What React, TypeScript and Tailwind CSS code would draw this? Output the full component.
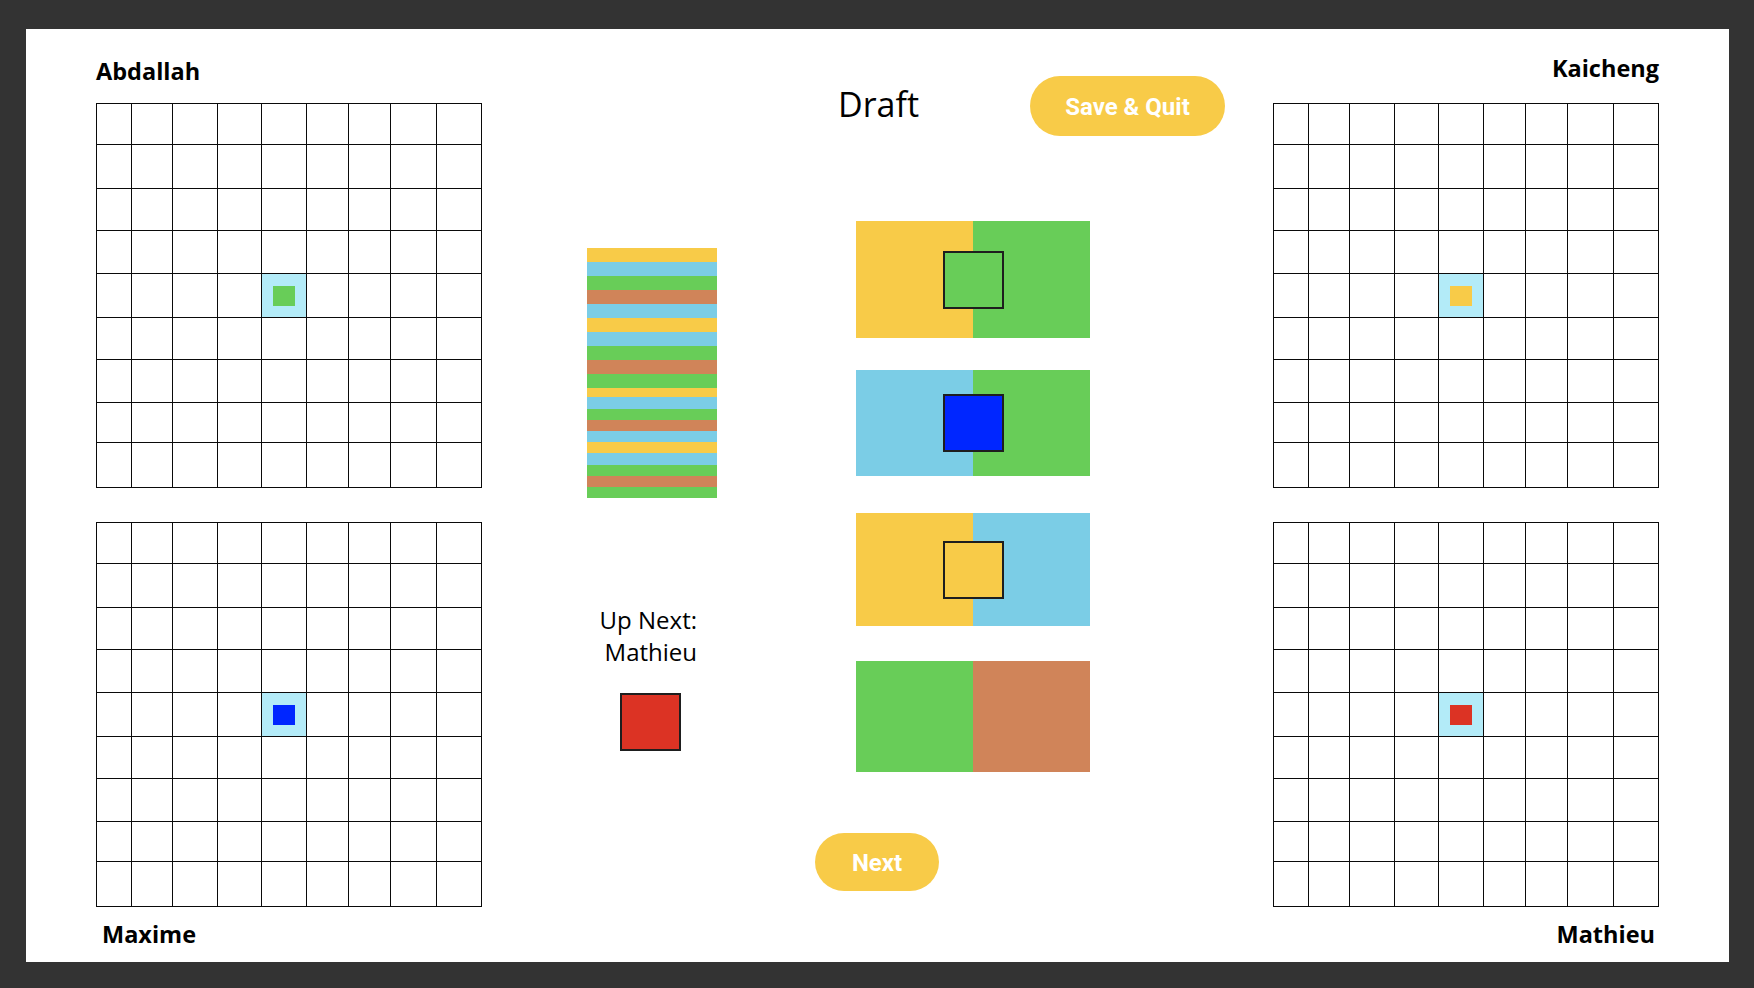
import React from "react";

const COLS = "grid-cols-[34px_40px_44px_43px_44px_41px_41px_45px_44px]";

function Board({ marker }: { marker: string }) {
  const cells = Array.from({ length: 81 }, (_, i) => i);
  return (
    <div
      className={`grid ${COLS} grid-rows-[40px_43px_41px_42px_43px_41px_42px_39px_44px] gap-px bg-[#0a0a0a] p-px w-[386px] h-[385px]`}
    >
      {cells.map((i) =>
        i === 40 ? (
          <div key={i} className="bg-[#b3ebf8] flex items-center justify-center">
            <div className={`w-[22px] h-[20px] ${marker}`} />
          </div>
        ) : (
          <div key={i} className="bg-white" />
        )
      )}
    </div>
  );
}

const STRIPES: string[] = [
  "h-[14px] bg-[#f8cb48]",
  "h-[14px] bg-[#7bcde6]",
  "h-[14px] bg-[#68cd58]",
  "h-[14px] bg-[#d08459]",
  "h-[14px] bg-[#7bcde6]",
  "h-[14px] bg-[#f8cb48]",
  "h-[14px] bg-[#7bcde6]",
  "h-[14px] bg-[#68cd58]",
  "h-[14px] bg-[#d08459]",
  "h-[14px] bg-[#68cd58]",
  "h-[9px] bg-[#f8cb48]",
  "h-[12px] bg-[#7bcde6]",
  "h-[11px] bg-[#68cd58]",
  "h-[11px] bg-[#d08459]",
  "h-[11px] bg-[#7bcde6]",
  "h-[11px] bg-[#f8cb48]",
  "h-[12px] bg-[#7bcde6]",
  "h-[11px] bg-[#68cd58]",
  "h-[11px] bg-[#d08459]",
  "h-[11px] bg-[#68cd58]",
];

type Tile = {
  box: string;
  left: string;
  right: string;
  piece?: string;
};

const TILES: Tile[] = [
  { box: "h-[117px]", left: "bg-[#f8cb48]", right: "bg-[#68cd58]", piece: "bg-[#68cd58]" },
  { box: "h-[106px] mt-[32px]", left: "bg-[#7bcde6]", right: "bg-[#68cd58]", piece: "bg-[#0026ff]" },
  { box: "h-[113px] mt-[37px]", left: "bg-[#f8cb48]", right: "bg-[#7bcde6]", piece: "bg-[#f8cb48]" },
  { box: "h-[111px] mt-[35px]", left: "bg-[#68cd58]", right: "bg-[#d08459]" },
];

function Domino({ t }: { t: Tile }) {
  return (
    <div className={`relative flex w-[234px] ${t.box}`}>
      <div className={`w-[117px] h-full ${t.left}`} />
      <div className={`w-[117px] h-full ${t.right}`} />
      {t.piece && (
        <div className="absolute inset-0 flex items-center justify-center">
          <div className={`w-[61px] h-[58px] border-2 border-[#1e1e1e] ${t.piece}`} />
        </div>
      )}
    </div>
  );
}

const nameCls =
  "font-['Open_Sans',sans-serif] font-bold text-[23.5px] leading-[32px] h-[32px] text-black";

export default function App() {
  return (
    <div className="w-[1754px] h-[988px] bg-[#333333] pt-[29px] pl-[26px] overflow-hidden">
      <div className="w-[1703px] h-[933px] bg-white flex px-[70px]">
        {/* Left players */}
        <div className="flex flex-col w-[386px] shrink-0">
          <div className={`${nameCls} mt-[26px]`}>Abdallah</div>
          <div className="mt-[16px]">
            <Board marker="bg-[#68cd58]" />
          </div>
          <div className="mt-[34px]">
            <Board marker="bg-[#0026ff]" />
          </div>
          <div className={`${nameCls} mt-[11px] pl-[6px]`}>Maxime</div>
        </div>

        {/* Center */}
        <div className="flex flex-col flex-1">
          <div className="flex items-center mt-[47px] h-[60px] pl-[356px]">
            <div className="w-[192px] font-['Open_Sans',sans-serif] text-[34px] leading-[40px] text-black -mt-[4px]">
              Draft
            </div>
            <button className="w-[195px] h-[60px] rounded-full bg-[#f8cb48] text-white font-['Roboto',sans-serif] font-bold text-[24px] leading-none flex items-center justify-center pt-[2px]">
              Save &amp; Quit
            </button>
          </div>

          <div className="flex mt-[85px] pl-[105px]">
            <div className="flex flex-col w-[130px] mt-[27px]">
              <div className="flex flex-col w-[130px]">
                {STRIPES.map((s, i) => (
                  <div key={i} className={`w-full ${s}`} />
                ))}
              </div>
              <div className="mt-[106px] pr-[20px] text-right font-['Open_Sans',sans-serif] text-[24px] leading-[32px] text-black whitespace-nowrap">
                <div>Up Next:</div>
                <div>Mathieu</div>
              </div>
              <div className="mt-[25px] ml-[33px] w-[61px] h-[58px] bg-[#dc3324] border-2 border-[#1e1e1e]" />
            </div>

            <div className="flex flex-col ml-[139px]">
              {TILES.map((t, i) => (
                <Domino key={i} t={t} />
              ))}
            </div>
          </div>

          <div className="mt-[61px] ml-[333px]">
            <button className="w-[124px] h-[58px] rounded-full bg-[#f8cb48] text-white font-['Roboto',sans-serif] font-bold text-[24px] leading-none flex items-center justify-center pt-[2px]">
              Next
            </button>
          </div>
        </div>

        {/* Right players */}
        <div className="flex flex-col w-[386px] shrink-0">
          <div className={`${nameCls} mt-[23px] text-right`}>Kaicheng</div>
          <div className="mt-[19px]">
            <Board marker="bg-[#f8cb48]" />
          </div>
          <div className="mt-[34px]">
            <Board marker="bg-[#dc3324]" />
          </div>
          <div className={`${nameCls} mt-[11px] pr-[4px] text-right`}>Mathieu</div>
        </div>
      </div>
    </div>
  );
}
